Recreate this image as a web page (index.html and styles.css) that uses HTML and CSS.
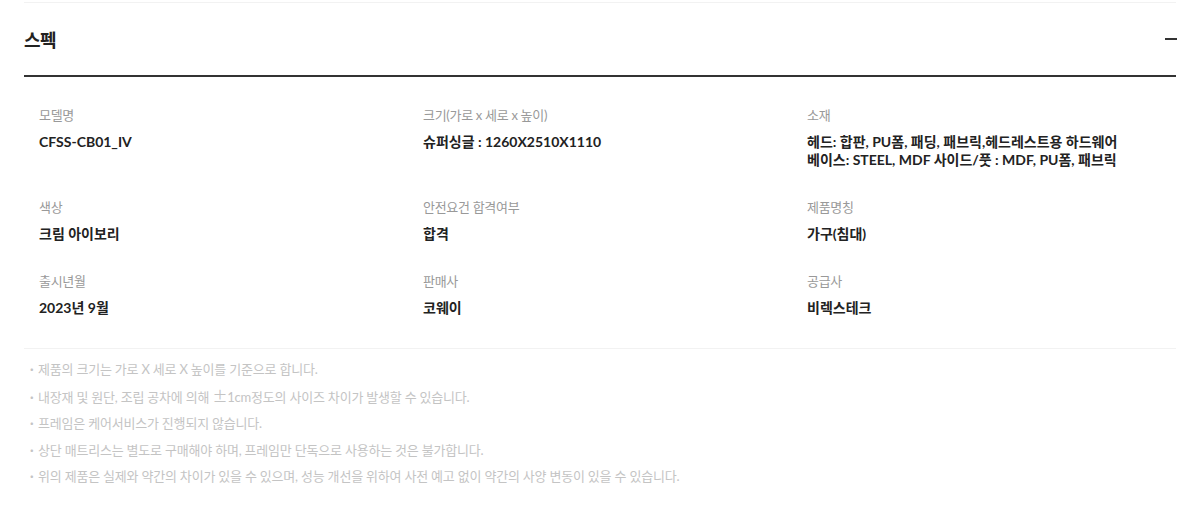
FILE: index.html
```html
<!DOCTYPE html>
<html lang="ko">
<head>
    <meta charset="UTF-8">
    <meta name="viewport" content="width=device-width, initial-scale=1.0">
    <title>스펙</title>
    <link rel="stylesheet" href="styles.css">
</head>

<body>
    <section class="spec">
        <div class="spec-head">
            <h2>스펙</h2>
            <span class="toggle"></span>
        </div>

        <div class="spec-grid">
            <div class="cell">
                <p class="label">모델명</p>
                <p class="value">CFSS-CB01_IV</p>
            </div>
            <div class="cell">
                <p class="label">크기(가로 x 세로 x 높이)</p>
                <p class="value">슈퍼싱글 : 1260X2510X1110</p>
            </div>
            <div class="cell">
                <p class="label">소재</p>
                <p class="value">헤드: 합판, PU폼, 패딩, 패브릭,헤드레스트용 하드웨어<br>베이스: STEEL, MDF 사이드/풋 : MDF, PU폼, 패브릭</p>
            </div>
            <div class="cell">
                <p class="label">색상</p>
                <p class="value">크림 아이보리</p>
            </div>
            <div class="cell">
                <p class="label">안전요건 합격여부</p>
                <p class="value">합격</p>
            </div>
            <div class="cell">
                <p class="label">제품명칭</p>
                <p class="value">가구(침대)</p>
            </div>
            <div class="cell">
                <p class="label">출시년월</p>
                <p class="value">2023년 9월</p>
            </div>
            <div class="cell">
                <p class="label">판매사</p>
                <p class="value">코웨이</p>
            </div>
            <div class="cell">
                <p class="label">공급사</p>
                <p class="value">비렉스테크</p>
            </div>
        </div>

        <ul class="notes">
            <li>제품의 크기는 가로 X 세로 X 높이를 기준으로 합니다.</li>
            <li>내장재 및 원단, 조립 공차에 의해 <span class="pm">±</span>1cm정도의 사이즈 차이가 발생할 수 있습니다.</li>
            <li>프레임은 케어서비스가 진행되지 않습니다.</li>
            <li>상단 매트리스는 별도로 구매해야 하며, 프레임만 단독으로 사용하는 것은 불가합니다.</li>
            <li>위의 제품은 실제와 약간의 차이가 있을 수 있으며, 성능 개선을 위하여 사전 예고 없이 약간의 사양 변동이 있을 수 있습니다.</li>
        </ul>
    </section>
</body>
</html>
```
FILE: styles.css
```css
body {
    margin: 0;
    padding: 0;
    background-color: #fff;
    font-family: 'Lato', 'Noto Sans CJK KR', sans-serif;
    color: #222;
}

.spec {
    margin: 2px 24px 0;
    border-top: 1px solid #f2f2f2;
}

.spec-head {
    display: flex;
    align-items: center;
    justify-content: space-between;
    height: 72px;
    border-bottom: 2px solid #333;
}

.spec-head h2 {
    margin: 0;
    font-size: 18px;
    font-weight: 700;
    color: #222;
    letter-spacing: -0.5px;
}

.toggle {
    display: block;
    width: 12px;
    height: 2px;
    margin-right: -1px;
    background-color: #333;
}

.spec-grid {
    display: grid;
    grid-template-columns: repeat(3, 1fr);
    row-gap: 29px;
    padding: 29px 0 31px;
    border-bottom: 1px solid #f2f2f2;
}

.cell {
    padding-left: 15px;
}

.cell p {
    margin: 0;
    line-height: 18px;
}

.label {
    font-size: 13px;
    color: #999;
    letter-spacing: -0.3px;
    margin-bottom: 9px !important;
}

.value {
    font-size: 14px;
    font-weight: 700;
    color: #222;
    letter-spacing: 0;
}

.notes {
    list-style: none;
    margin: 0;
    padding: 7px 0 0 6px;
}

.notes li {
    font-size: 13px;
    line-height: 26.5px;
    color: #c4c4c4;
    letter-spacing: -0.2px;
}

.notes li::before {
    content: "·";
    display: inline-block;
    width: 8px;
    font-weight: 700;
}

.notes .pm {
    font-family: 'Noto Sans CJK KR', sans-serif;
    font-size: 15px;
}
```
